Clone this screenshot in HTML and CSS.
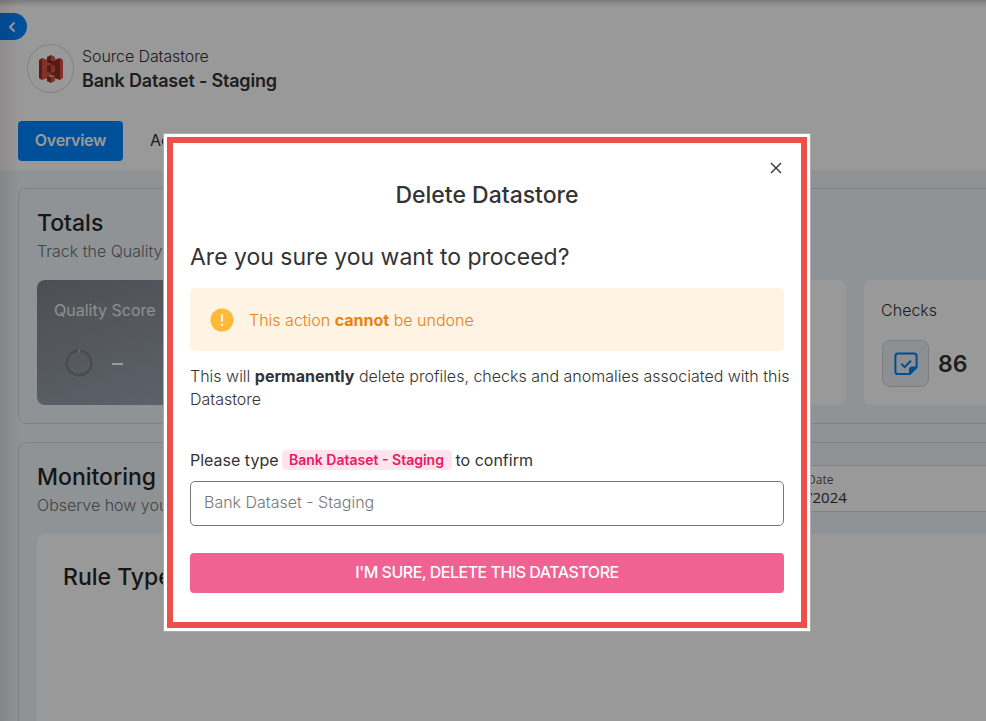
FILE: index.html
```html
<!DOCTYPE html>
<html lang="en">
<head>
<meta charset="utf-8">
<title>Delete Datastore</title>
<link rel="stylesheet" href="styles.css">
</head>
<body>
<div class="page">
  <header class="header">
    <div class="source">
      <div class="avatar">
        <svg width="26" height="30" viewBox="0 0 26 30">
          <path d="M1 6l3-2v22l-3-2z" fill="#8c3123"/>
          <path d="M4 4l9 3v16l-9 3z" fill="#e05243"/>
          <path d="M25 6l-3-2v22l3-2z" fill="#e05243"/>
          <path d="M22 4l-9 3v16l9 3z" fill="#8c3123"/>
          <path d="M13 1L9 3v5l4 1z" fill="#8c3123"/>
          <path d="M13 1l4 2v5l-4 1z" fill="#e05243"/>
          <path d="M13 11l-4 1v6l4 1z" fill="#8c3123"/>
          <path d="M13 11l4 1v6l-4 1z" fill="#e05243"/>
          <path d="M9 8l4-1 4 1-4 1z" fill="#5e1f18"/>
          <path d="M13 21l-4 1v5l4 2z" fill="#8c3123"/>
          <path d="M13 21l4 1v5l-4 2z" fill="#e05243"/>
          <path d="M9 22l4 1 4-1-4-1z" fill="#f2b0a9"/>
        </svg>
      </div>
      <div class="source-text">
        <div class="source-kind"><span class="t-kind">Source Datastore</span></div>
        <div class="source-name"><span class="t-name">Bank Dataset - Staging</span></div>
      </div>
    </div>
    <nav class="tabs">
      <div class="tab tab-active">Overview</div>
      <div class="tab">Activity</div>
    </nav>
  </header>
  <main class="main">
    <section class="card totals">
      <h2 class="card-title t-totals">Totals</h2>
      <p class="card-sub">Track the Quality Score</p>
      <div class="tiles">
        <div class="tile quality">
          <div class="tile-label">Quality Score</div>
          <div class="quality-row">
            <svg width="28" height="28" viewBox="0 0 28 28"><circle cx="14" cy="14" r="12.3" fill="none" stroke="#7d7d80" stroke-width="2.4"/><path d="M14 .5v3" stroke="#ddd"/></svg>
            <span class="dash"></span>
          </div>
        </div>
        <div class="tile"></div>
        <div class="tile"></div>
        <div class="tile">
          <div class="tile-label">Checks</div>
          <div class="tile-row">
            <div class="check-icon">
              <svg width="24" height="24" viewBox="0 0 24 24" fill="none" stroke="#0080f6" stroke-width="2">
                <path d="M15.7 22H4a2.6 2.6 0 0 1-2.6-2.600V4A2.600 2.600 0 0 1 4 1.500h16A2.600 2.600 0 0 1 22.600 4v11.300z" stroke-linejoin="round"/>
                <path d="M15.700 22v-4a2.700 2.700 0 0 1 2.700-2.700h4.200z" fill="#0080f6" stroke-linejoin="round" stroke-width="1.500"/>
                <path d="M7.300 11.800l3.300 3.300 6.300-6.300"/>
              </svg>
            </div>
            <span class="tile-value">86</span>
          </div>
        </div>
      </div>
    </section>
    <section class="card monitoring">
      <div class="monitoring-head">
        <div>
          <h2 class="card-title t-monitoring">Monitoring</h2>
          <p class="card-sub t-observe">Observe how your</p>
        </div>
        <div class="date-field">
          <div class="date-label">Date</div>
          <div class="date-value">/2024</div>
        </div>
      </div>
      <div class="chart"><h3 class="chart-title">Rule Type</h3></div>
    </section>
  </main>
  <div class="back"><svg width="8" height="12" viewBox="0 0 8 12"><path d="M6.500 1.500L2 6l4.500 4.500" fill="none" stroke="#fff" stroke-width="2"/></svg></div>
  <div class="edge-top"></div>
  <div class="edge-left"></div>
  <div class="scrim"></div>
  <div class="dialog">
    <svg class="close" width="12" height="12" viewBox="0 0 12 12"><path d="M1 1l10 10M11 1L1 11" stroke="#333" stroke-width="1.400"/></svg>
    <h1 class="dialog-title"><span class="t-title">Delete Datastore</span></h1>
    <h2 class="question">Are you sure you want to proceed?</h2>
    <div class="alert">
      <svg width="24" height="24" viewBox="0 0 24 24"><circle cx="12" cy="12" r="11.500" fill="#ffb938"/><path d="M12 6.200v7.300M12 15.700v2.200" stroke="#fff3e3" stroke-width="2.200"/></svg>
      <span class="alert-text">This action <b>cannot</b> be undone</span>
    </div>
    <p class="body"><span class="body-line">This will <b>permanently</b> delete profiles, checks and anomalies associated with this</span> <span class="body-last">Datastore</span></p>
    <div class="confirm"><span class="t-please">Please type</span><span class="chip">Bank Dataset - Staging</span><span class="t-confirm">to confirm</span></div>
    <div class="input">Bank Dataset - Staging</div>
    <div class="button"><span class="t-button">I'M SURE, DELETE THIS DATASTORE</span></div>
  </div>
</div>
</body>
</html>
```
FILE: styles.css
```css
* { box-sizing: border-box; }
body, h1, h2, h3, p { margin: 0; }
body {
  font-family: Inter, "Liberation Sans", sans-serif;
  color: #333;
  overflow: hidden;
}
h1, h2, h3 { font-weight: 500; }
.page {
  position: relative;
  width: 986px;
  height: 721px;
  overflow: hidden;
  background: #eff5f9;
}
.header { height: 170px; background: #fff; padding: 44px 18px 0; }
.source { display: flex; gap: 8px; padding-left: 9px; height: 49px; }
.avatar {
  width: 47px; height: 49px;
  border: 1px solid #dcdcdc; border-radius: 50%;
  display: flex; align-items: center; justify-content: center;
}
.source-text { white-space: nowrap; }
.source-kind { font-size: 16px; line-height: 24px; font-weight: 300; letter-spacing: -0.1px; }
.source-name { font-size: 18px; line-height: 25px; font-weight: 600; letter-spacing: -0.2px; }
.tabs { display: flex; margin-top: 28px; }
.tab { height: 40px; line-height: 39px; padding: 0 27px; font-size: 16px; }
.tab-active {
  width: 105px; padding: 0; text-align: center;
  background: #0084ff; color: #fff; border-radius: 4px;
  font-weight: 600; letter-spacing: -0.3px;
}
.main { padding: 18px; display: flex; flex-direction: column; gap: 18px; width: 1158px; }
.card { border: 1px solid #d5dade; border-radius: 8px; padding: 18px; }
.totals { height: 236px; }
.card-title { font-size: 23px; line-height: 32px; color: #262626; }
.card-sub { font-size: 16px; line-height: 24px; font-weight: 300; color: #707070; white-space: nowrap; }
.tiles { display: grid; grid-template-columns: repeat(4, 257.700px); gap: 18px; margin-top: 17px; }
.tile { height: 125px; background: #fff; border-radius: 8px; padding: 18px 17px; }
.quality { background: linear-gradient(160deg, #80838b, #a2adbb); color: #fff; }
.tile-label { font-size: 16px; line-height: 24px; font-weight: 300; }
.quality .tile-label { font-weight: 400; color: #efefef; }
.quality-row { display: flex; align-items: center; gap: 19px; padding: 27px 0 0 11px; }
.dash { width: 11px; height: 2px; background: #fff; margin-top: 2px; }
.tile-row { display: flex; align-items: center; gap: 9px; margin: 18px 0 0 1px; }
.check-icon {
  width: 47px; height: 47px; border: 1px solid #ccd2d8; border-radius: 8px;
  background: #eaf0f6; display: flex; align-items: center; justify-content: center;
}
.tile-value { font-size: 23px; font-weight: 600; }
.monitoring { height: 320px; }
.monitoring-head { display: flex; height: 73px; }
.monitoring-head > div:first-child { width: 680px; }
.date-field {
  margin-top: 4px; flex: 1; height: 47px; padding: 6px 0 0 89px; background: #fff;
  border: 1px solid #d5dade; font-family: "Open Sans", "Noto Sans", sans-serif;
}
.date-label { font-size: 12px; line-height: 15px; color: #555; }
.date-value { font-size: 15px; line-height: 20px; }
.chart { height: 260px; background: #fff; border-radius: 8px; padding: 27px 26px; }
.chart-title { font-size: 23px; line-height: 32px; color: #262626; white-space: nowrap; }
.back {
  position: absolute; left: 0; top: 13px; width: 27px; height: 27px;
  background: #0084ff; border-radius: 0 14px 14px 0;
  display: flex; align-items: center; padding-left: 8px;
}
.edge-top { position: absolute; inset: 0 0 auto; height: 7px; background: linear-gradient(rgba(0,0,0,.2), transparent); }
.edge-left { position: absolute; inset: 0 auto 0 0; width: 18px; background: linear-gradient(90deg, rgba(60,0,0,.09), transparent); }
.scrim { position: absolute; inset: 0; background: rgba(0,0,0,.4); }
.dialog {
  position: absolute; left: 167px; top: 137px; width: 640px; height: 491px;
  border: 6px solid #ed4f4b; background: #fff; outline: 3px solid #fff;
  padding: 34px 17px 0; box-shadow: 0 0 0 4px #aaa;
}
.close { position: absolute; right: 19px; top: 19px; }
.dialog-title { font-size: 23px; line-height: 36px; text-align: center; }
.question { font-size: 23px; line-height: 32px; font-weight: 400; margin-top: 28px; white-space: nowrap; }
.alert {
  height: 63px; margin-top: 15px; padding-left: 20px; border-radius: 5px; background: #fff3e3;
  display: flex; align-items: center; gap: 15px; color: #e38312; font-size: 16px; font-weight: 300;
}
b { font-weight: 700; }
.body { font-size: 16px; line-height: 23px; font-weight: 300; margin-top: 14px; }
.body-line { display: block; white-space: nowrap; }
.confirm { display: flex; align-items: center; height: 24px; margin-top: 37px; font-size: 16px; white-space: nowrap; }
.chip {
  width: 170px; height: 20px; margin: 0 4px 0 3px; border-radius: 5px; background: #fde4ed; color: #ec1765;
  font-size: 14px; line-height: 20px; font-weight: 600; text-align: center;
}
.input {
  height: 45px; margin-top: 9px; padding-left: 13px; border: 1px solid #777; border-radius: 5px;
  font-size: 16px; line-height: 41px; font-weight: 300; color: #777;
}
.button {
  height: 40px; margin-top: 27px; border-radius: 4px; background: #f06292; color: #fff;
  text-align: center; line-height: 39px; font-size: 16px; font-weight: 500; letter-spacing: -0.5px;
}
```
